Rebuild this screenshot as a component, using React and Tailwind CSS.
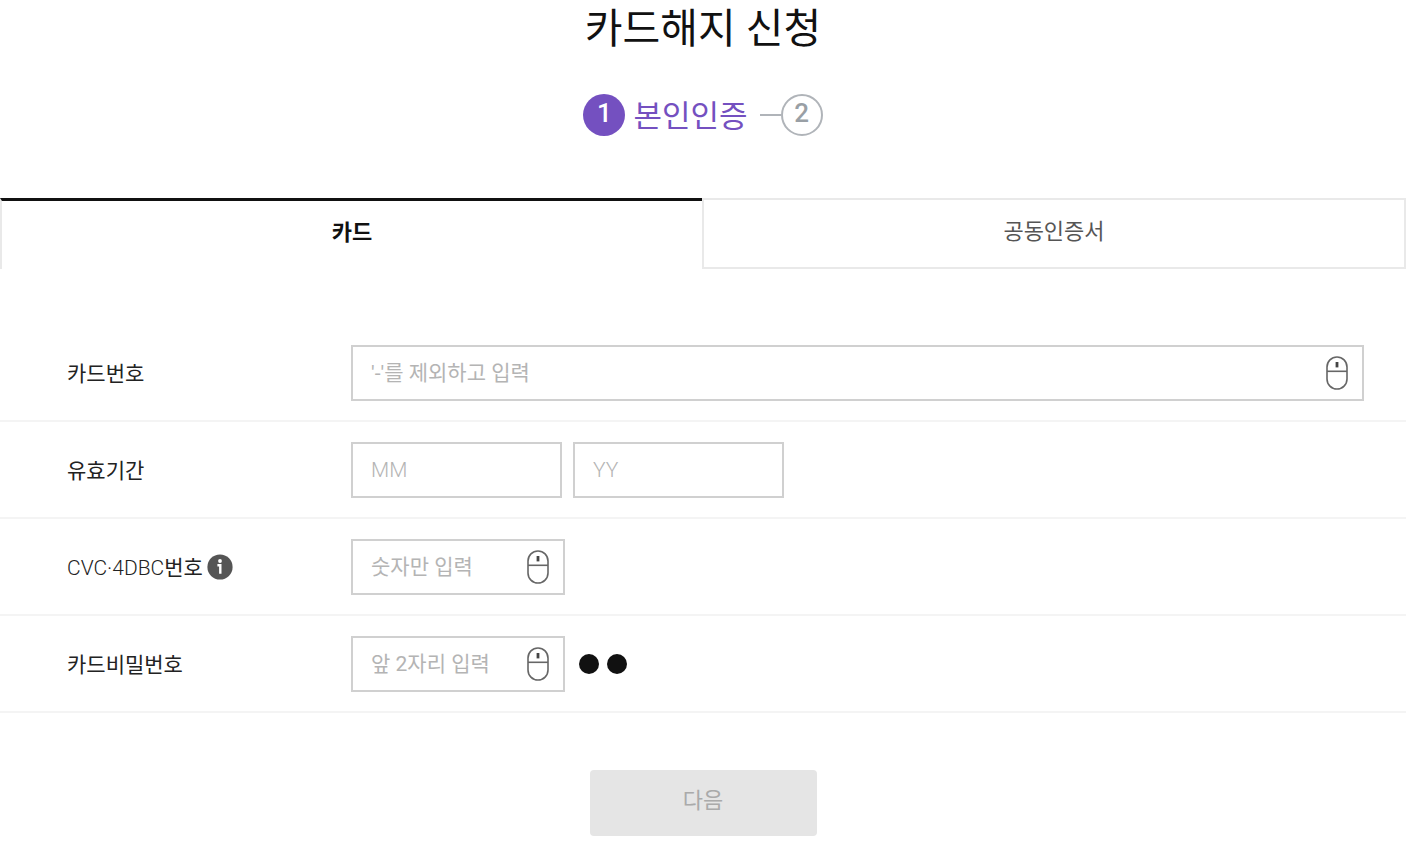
import { useState } from "react";
import clsx from "clsx";

const tabs = [
    { id: "card", label: "카드" },
    { id: "cert", label: "공동인증서" },
];

function MouseIcon() {
    return (
        <svg
            width="22"
            height="34"
            viewBox="0 0 22 34"
            fill="none"
            stroke="#666"
            strokeWidth="1.6"
            aria-hidden="true"
        >
            <rect x="1" y="1" width="20" height="32" rx="10" />
            <path d="M1 15.3h20" />
            <path d="M11 6v5.4" stroke="#444" strokeWidth="2.8" />
        </svg>
    );
}

function InfoIcon() {
    return (
        <svg width="26" height="26" viewBox="0 0 26 26" aria-hidden="true">
            <circle cx="13" cy="13" r="12.6" fill="#555" />
            <circle cx="13" cy="7" r="1.9" fill="#fff" />
            <path
                d="M10.4 11.2h2.9v8.6"
                fill="none"
                stroke="#fff"
                strokeWidth="2.4"
            />
        </svg>
    );
}

function Field({ className, keypad, ...props }) {
    return (
        <div
            className={clsx(
                "flex h-14 items-center border-2 border-[#d0d0d0] pl-[18px]",
                className,
            )}
        >
            <input
                type="text"
                autoComplete="off"
                className="h-full w-full min-w-0 flex-1 bg-transparent text-[21px] text-[#111] outline-none placeholder:text-[#b4b4b4]"
                {...props}
            />
            {keypad && (
                <button
                    type="button"
                    aria-label="마우스 입력"
                    className="mr-[14px] shrink-0"
                >
                    <MouseIcon />
                </button>
            )}
        </div>
    );
}

function Row({ label, htmlFor, info, children }) {
    return (
        <div className="flex items-center border-b-2 border-[#f4f4f4] pt-5 pr-[42px] pb-[19px]">
            <div className="flex w-[351px] shrink-0 items-center gap-1 pl-[67px]">
                <label
                    htmlFor={htmlFor}
                    className="pt-1 text-[21px] text-[#222]"
                >
                    {label}
                </label>
                {info && (
                    <button type="button" aria-label="안내">
                        <InfoIcon />
                    </button>
                )}
            </div>
            {children}
        </div>
    );
}

export default function App() {
    const [tab, setTab] = useState("card");

    return (
        <main className="bg-white pr-4 font-[Roboto,'Noto_Sans_CJK_KR',sans-serif] text-[#111]">
            <h1 className="pt-[5px] text-center text-[41px] leading-[48px]">
                카드해지 신청
            </h1>

            {/* Steps */}
            <ol className="mt-[41px] flex items-center justify-center">
                <li className="flex items-center gap-2 text-[31px] text-[#7450c0]">
                    <span className="flex size-[42px] items-center justify-center rounded-full bg-[#7450c0] pb-1 text-[26px] font-medium text-white">
                        1
                    </span>
                    <span className="pt-1 leading-[38px]">본인인증</span>
                </li>
                <li className="flex items-center pl-3">
                    <span className="h-[2px] w-[21px] bg-[#b0b4b9]" />
                    <span className="flex size-[42px] items-center justify-center rounded-full border-2 border-[#b0b4b9] pb-1 text-[26px] font-medium text-[#999fa5]">
                        2
                    </span>
                </li>
            </ol>

            {/* Tabs */}
            <div role="tablist" className="mt-[62px] flex">
                {tabs.map((item) => (
                    <button
                        key={item.id}
                        type="button"
                        role="tab"
                        aria-selected={tab === item.id}
                        onClick={() => setTab(item.id)}
                        className={clsx(
                            "h-[71px] flex-1 pb-[5px] text-[22px]",
                            tab === item.id
                                ? "border-t-3 border-l-2 border-t-[#111] border-l-[#e9e9e9] font-bold text-[#111]"
                                : "border-2 border-[#e9e9e9] text-[#555]",
                        )}
                    >
                        {item.label}
                    </button>
                ))}
            </div>

            <form className="pt-14" onSubmit={(e) => e.preventDefault()}>
                <Row label="카드번호" htmlFor="card-number">
                    <Field
                        id="card-number"
                        className="flex-1"
                        placeholder="'-'를 제외하고 입력"
                        keypad
                    />
                </Row>
                <Row label="유효기간" htmlFor="exp-month">
                    <div className="flex gap-[11px]">
                        <Field
                            id="exp-month"
                            className="w-[211px] font-light"
                            placeholder="MM"
                        />
                        <Field
                            id="exp-year"
                            aria-label="유효기간 년"
                            className="w-[211px] font-light"
                            placeholder="YY"
                        />
                    </div>
                </Row>
                <Row
                    label={
                        <>
                            <span className="font-light">CVC·4DBC</span>번호
                        </>
                    }
                    htmlFor="cvc"
                    info
                >
                    <Field
                        id="cvc"
                        className="w-[214px]"
                        placeholder="숫자만 입력"
                        keypad
                    />
                </Row>
                <Row label="카드비밀번호" htmlFor="card-password">
                    <Field
                        id="card-password"
                        className="w-[214px]"
                        placeholder="앞 2자리 입력"
                        keypad
                    />
                    <div className="ml-[14px] flex gap-2">
                        <span className="size-5 rounded-full bg-[#111]" />
                        <span className="size-5 rounded-full bg-[#111]" />
                    </div>
                </Row>

                <div className="flex justify-center pt-[57px]">
                    <button
                        type="submit"
                        disabled
                        className="h-[66px] w-[227px] rounded bg-[#e5e5e5] pb-[5px] text-[22px] text-[#aaa]"
                    >
                        다음
                    </button>
                </div>
            </form>
        </main>
    );
}
